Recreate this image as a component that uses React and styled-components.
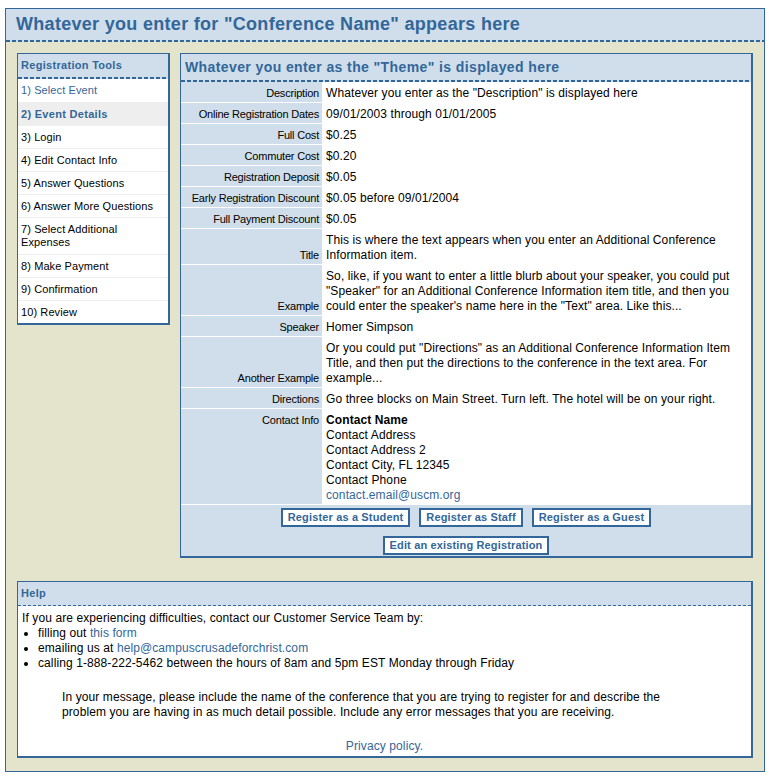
import React from 'react';
import styled, { createGlobalStyle } from 'styled-components';

const BLUE = '#336699';
const LIGHT = '#cfdeea';
const BEIGE = '#e4e4cc';

const GlobalStyle = createGlobalStyle`
  body {
    margin: 8px 4px 8px 5px;
    font-family: "Liberation Sans", Arial, sans-serif;
    color: #000;
  }
  a {
    color: ${BLUE};
    text-decoration: none;
  }
`;

// dashed rule drawn as a repeating strip so the dash rhythm matches the old page
const dashes = (dash, gap, height) => `
  background-image: linear-gradient(to right, ${BLUE} ${dash}px, transparent ${dash}px);
  background-size: ${dash + gap}px ${height}px;
  background-repeat: repeat-x;
  background-position: left bottom;
  padding-bottom: ${height}px;
`;

const Page = styled.div`
  border: 1px solid ${BLUE};
  background-color: ${BEIGE};
`;

const Masthead = styled.div`
  background-color: ${LIGHT};
  ${dashes(4, 2, 2)}
`;

const SiteTitle = styled.h1`
  margin: 0;
  height: 31px;
  line-height: 31px;
  padding-left: 10px;
  font-size: 18px;
  letter-spacing: 0.3px;
  font-weight: bold;
  color: ${BLUE};
`;

const Content = styled.div`
  padding: 11px 11px 13px 11px;
`;

const Columns = styled.div`
  display: flex;
  align-items: flex-start;
  gap: 10px;
`;

const Box = styled.div`
  background-color: #fff;
  border-style: solid;
  border-color: ${BLUE};
  border-width: 1px 2px 2px 1px;
`;

const Sidebar = styled(Box)`
  width: 150px;
  flex: 0 0 auto;
`;

const BoxHeader = styled.div`
  background-color: ${LIGHT};
  color: ${BLUE};
  font-weight: bold;
  font-size: ${(p) => p.size || 11}px;
  letter-spacing: ${(p) => (p.size ? 0.4 : 0.3)}px;
  height: ${(p) => p.h}px;
  line-height: ${(p) => p.h}px;
  padding-left: ${(p) => p.indent || 3}px;
  ${(p) => dashes(p.dash, 2, p.thick)}
`;

const StepItem = styled.div`
  font-size: 11px;
  line-height: 13px;
  padding: 5px 4px ${(p) => (p.roomy ? 5 : 4)}px 3px;
  border-bottom: ${(p) => (p.last ? 'none' : '1px solid #eeeeee')};
  background-color: ${(p) => (p.current ? '#eeeeee' : '#fff')};
  color: ${(p) => (p.current || p.link ? BLUE : '#000')};
  font-weight: ${(p) => (p.current ? 'bold' : 'normal')};
  letter-spacing: ${(p) => (p.current ? '0.3px' : '0.1px')};
`;

const Panel = styled(Box)`
  flex: 1;
  background-color: ${LIGHT};
`;

const InfoGrid = styled.div`
  display: grid;
  grid-template-columns: 141px 1fr;
  row-gap: 1px;
  background-color: #fff;
  padding-bottom: 1px;
`;

const Label = styled.div`
  background-color: ${LIGHT};
  font-size: 11px;
  letter-spacing: -0.2px;
  line-height: 15px;
  text-align: right;
  padding: 4px 3px 1px 3px;
  display: flex;
  flex-direction: column;
  justify-content: ${(p) => (p.top ? 'flex-start' : 'flex-end')};
`;

const Value = styled.div`
  background-color: #fff;
  font-size: 12px;
  letter-spacing: 0.1px;
  line-height: 15px;
  padding: 4px 3px 1px 4px;
`;

const ContactName = styled.div`
  font-weight: bold;
`;

const Actions = styled.div`
  display: flex;
  flex-direction: column;
  align-items: center;
  gap: 9px;
  padding: 3px 0 1px;
`;

const ButtonRow = styled.div`
  display: flex;
  gap: 9px;
`;

const ActionButton = styled.button`
  height: 19px;
  padding: 0 5px;
  border: 2px solid ${BLUE};
  background-color: #fff;
  color: ${BLUE};
  font-family: "Liberation Sans", Arial, sans-serif;
  font-weight: bold;
  font-size: 11px;
  letter-spacing: 0.15px;
  line-height: 15px;
  cursor: pointer;
`;

const HelpBox = styled(Box)`
  margin-top: 23px;
`;

const HelpBody = styled.div`
  font-size: 12px;
  letter-spacing: 0.1px;
  line-height: 15px;
  padding: 5px 4px 2px 4px;
`;

const HelpList = styled.ul`
  margin: 0;
  padding-left: 16px;
  list-style: disc;
`;

const Note = styled.p`
  margin: 19px 0 0 40px;
  width: 615px;
`;

const Footer = styled.div`
  margin-top: 19px;
  text-align: center;
`;

const steps = [
  '1) Select Event',
  '2) Event Details',
  '3) Login',
  '4) Edit Contact Info',
  '5) Answer Questions',
  '6) Answer More Questions',
  '7) Select Additional Expenses',
  '8) Make Payment',
  '9) Confirmation',
  '10) Review',
];

const details = [
  ['Description', 'Whatever you enter as the "Description" is displayed here'],
  ['Online Registration Dates', '09/01/2003 through 01/01/2005'],
  ['Full Cost', '$0.25'],
  ['Commuter Cost', '$0.20'],
  ['Registration Deposit', '$0.05'],
  ['Early Registration Discount', '$0.05 before 09/01/2004'],
  ['Full Payment Discount', '$0.05'],
  ['Title', 'This is where the text appears when you enter an Additional Conference Information item.'],
  ['Example', 'So, like, if you want to enter a little blurb about your speaker, you could put "Speaker" for an Additional Conference Information item title, and then you could enter the speaker\'s name here in the "Text" area. Like this...'],
  ['Speaker', 'Homer Simpson'],
  ['Another Example', 'Or you could put "Directions" as an Additional Conference Information Item Title, and then put the directions to the conference in the text area. For example...'],
  ['Directions', 'Go three blocks on Main Street. Turn left. The hotel will be on your right.'],
];

const App = () => {
  return (
    <>
      <GlobalStyle />
      <Page>
        <Masthead>
          <SiteTitle>Whatever you enter for "Conference Name" appears here</SiteTitle>
        </Masthead>
        <Content>
          <Columns>
            <Sidebar>
              <BoxHeader h={23} dash={4} thick={2} indent={3}>Registration Tools</BoxHeader>
              {steps.map((step, i) => (
                <StepItem
                  key={step}
                  link={i === 0}
                  current={i === 1}
                  roomy={i === 0 || i === 6}
                  last={i === steps.length - 1}
                >
                  {step}
                </StepItem>
              ))}
            </Sidebar>

            <Panel>
              <BoxHeader h={26} size={14} dash={4} thick={2} indent={4}>
                Whatever you enter as the "Theme" is displayed here
              </BoxHeader>
              <InfoGrid>
                {details.map(([label, text]) => (
                  <React.Fragment key={label}>
                    <Label>{label}</Label>
                    <Value>{text}</Value>
                  </React.Fragment>
                ))}
                <Label top>Contact Info</Label>
                <Value>
                  <ContactName>Contact Name</ContactName>
                  <div>Contact Address</div>
                  <div>Contact Address 2</div>
                  <div>Contact City, FL 12345</div>
                  <div>Contact Phone</div>
                  <a href="#">contact.email@uscm.org</a>
                </Value>
              </InfoGrid>
              <Actions>
                <ButtonRow>
                  <ActionButton>Register as a Student</ActionButton>
                  <ActionButton>Register as Staff</ActionButton>
                  <ActionButton>Register as a Guest</ActionButton>
                </ButtonRow>
                <ActionButton>Edit an existing Registration</ActionButton>
              </Actions>
            </Panel>
          </Columns>

          <HelpBox>
            <BoxHeader h={23} dash={3} thick={1} indent={3}>Help</BoxHeader>
            <HelpBody>
              If you are experiencing difficulties, contact our Customer Service Team by:
              <HelpList>
                <li>filling out <a href="#">this form</a></li>
                <li>emailing us at <a href="#">help@campuscrusadeforchrist.com</a></li>
                <li>calling 1-888-222-5462 between the hours of 8am and 5pm EST Monday through Friday</li>
              </HelpList>
              <Note>
                In your message, please include the name of the conference that you are trying to register for and describe the problem you are having in as much detail possible. Include any error messages that you are receiving.
              </Note>
              <Footer>
                <a href="#">Privacy policy.</a>
              </Footer>
            </HelpBody>
          </HelpBox>
        </Content>
      </Page>
    </>
  );
};

export default App;
